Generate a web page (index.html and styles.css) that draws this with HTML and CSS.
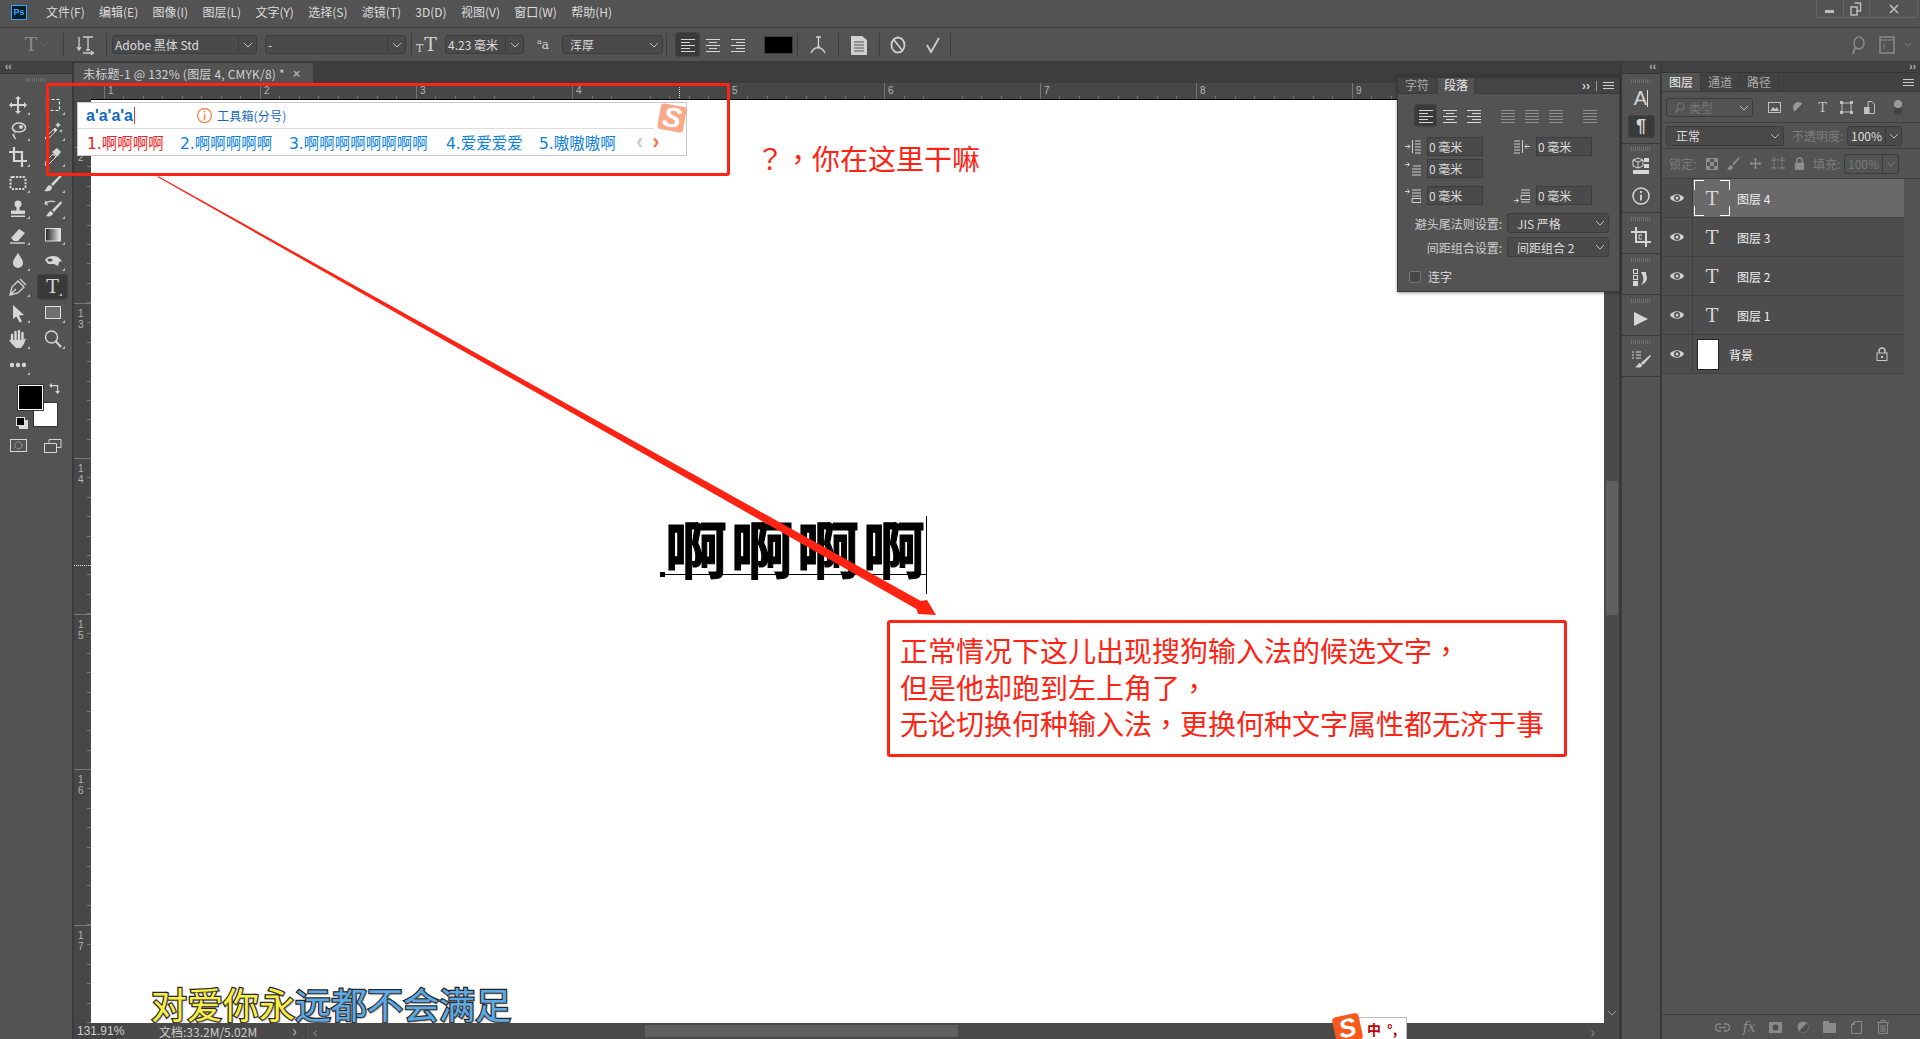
FILE: index.html
```html
<!DOCTYPE html>
<html>
  <head>
    <title>Photoshop</title>
    <meta charset="utf-8">
    <link rel="stylesheet" href="styles.css">
  </head>

  <body>
    <svg class="defs">
      <defs>
        <symbol id="chev" viewBox="0 0 10 6"><path d="M1 1l4 4 4-4" fill="none" stroke="currentColor"/></symbol>
        <symbol id="al-left" viewBox="0 0 16 16"><path d="M1 2.500h14M1 5.500h9M1 8.500h14M1 11.500h9M1 14.500h14" stroke="currentColor"/></symbol>
        <symbol id="al-center" viewBox="0 0 16 16"><path d="M1 2.500h14M4 5.500h8M1 8.500h14M4 11.500h8M1 14.500h14" stroke="currentColor"/></symbol>
        <symbol id="al-right" viewBox="0 0 16 16"><path d="M1 2.500h14M6 5.500h9M1 8.500h14M6 11.500h9M1 14.500h14" stroke="currentColor"/></symbol>
        <symbol id="al-just" viewBox="0 0 16 16"><path d="M1 2.500h14M1 5.500h14M1 8.500h14M1 11.500h14M1 14.500h14" stroke="currentColor"/></symbol>
        <symbol id="burger" viewBox="0 0 11 7"><path d="M0 .5h11M0 3.500h11M0 6.500h11" stroke="currentColor"/></symbol>
        <symbol id="grip" viewBox="0 0 20 4"><path d="M.5 0v4M2.500 0v4M4.500 0v4M6.500 0v4M8.500 0v4M10.500 0v4M12.500 0v4M14.500 0v4M16.500 0v4M18.500 0v4" stroke="currentColor"/></symbol>
        <symbol id="eye" viewBox="0 0 14 10"><path d="M0 5c3-5 11-5 14 0-3 5-11 5-14 0z" fill="currentColor"/><circle cx="7" cy="5" r="3" fill="#4d4d4d"/><circle cx="7" cy="5" r="1.500" fill="currentColor"/></symbol>
        <symbol id="lock" viewBox="0 0 12 14"><path d="M3 6V4a3 3 0 0 1 6 0v2" fill="none" stroke="currentColor" stroke-width="1.400"/><rect x="1" y="6" width="10" height="7.500" fill="none" stroke="currentColor"/><rect x="5" y="9" width="2" height="2" fill="currentColor"/></symbol>
        <linearGradient id="grad"><stop offset="0" stop-color="#222"/><stop offset="1" stop-color="#eee"/></linearGradient>
      </defs>
    </svg>

    <div class="app">
      <header class="menubar">
        <div class="pslogo">Ps</div>
        <nav class="menu">
          <span>文件(F)</span>
          <span>编辑(E)</span>
          <span>图像(I)</span>
          <span>图层(L)</span>
          <span>文字(Y)</span>
          <span>选择(S)</span>
          <span>滤镜(T)</span>
          <span>3D(D)</span>
          <span>视图(V)</span>
          <span>窗口(W)</span>
          <span>帮助(H)</span>
        </nav>
        <div class="winbtns">
          <div class="winbtn"><svg width="10" height="10" viewBox="0 0 10 10"><rect x="0" y="6" width="9" height="3" fill="currentColor"/></svg></div>
          <div class="winbtn"><svg width="12" height="14" viewBox="0 0 12 14"><path d="M4.500 1h6v8h-3M1 5h6v8H1z" fill="none" stroke="currentColor" stroke-width="1.500"/></svg></div>
          <div class="winbtn"><svg width="10" height="10" viewBox="0 0 10 10"><path d="M1 1l8 8M9 1l-8 8" stroke="currentColor" stroke-width="1.600"/></svg></div>
        </div>
      </header>

      <div class="optbar">
        <div class="opt-type"><span class="serif-t big dim">T</span><svg class="tiny-chev" width="8" height="5"><use href="#chev"/></svg></div>
        <div class="vsep"></div>
        <div class="opt-orient">
          <svg width="18" height="20" viewBox="0 0 18 20"><path d="M3 2v13M1 12l2 3 2-3M7 2h10M12 2v13M10 15h4M7 18h11M15 16l2 2-2 2" fill="none" stroke="currentColor" stroke-width="1.300"/></svg>
        </div>
        <div class="vsep"></div>
        <div class="sel sel-font"><span>Adobe 黑体 Std</span><i><svg width="10" height="6"><use href="#chev"/></svg></i></div>
        <div class="sel sel-style"><span>-</span><i><svg width="10" height="6"><use href="#chev"/></svg></i></div>
        <div class="vsep sep-a"></div>
        <div class="opt-size"><span class="serif-t small">T</span><span class="serif-t big">T</span></div>
        <div class="sel sel-size"><span>4.23 毫米</span><i><svg width="10" height="6"><use href="#chev"/></svg></i></div>
        <div class="opt-aa"><sup>a</sup>a</div>
        <div class="sel sel-aa"><span>浑厚</span><b><svg width="10" height="6"><use href="#chev"/></svg></b></div>
        <div class="vsep sep-b"></div>
        <div class="alignbtn on"><svg width="16" height="16"><use href="#al-left"/></svg></div>
        <div class="alignbtn"><svg width="16" height="16"><use href="#al-center"/></svg></div>
        <div class="alignbtn"><svg width="16" height="16"><use href="#al-right"/></svg></div>
        <div class="swatch"></div>
        <div class="vsep sep-c"></div>
        <div class="opt-warp"><svg width="16" height="20" viewBox="0 0 16 20"><path d="M6 2h5M8.500 2v10M7 12h3M1 18c3-7 11-7 14 0" fill="none" stroke="currentColor" stroke-width="1.400"/></svg></div>
        <div class="vsep"></div>
        <div class="opt-warp"><svg width="16" height="20" viewBox="0 0 16 20"><path d="M0 1h11l5 4v15H0z" fill="currentColor"/><path d="M3 7h10M3 10h10M3 13h10M3 16h10" stroke="#555" stroke-width="1.200"/></svg></div>
        <div class="vsep"></div>
        <div class="opt-act"><svg width="16" height="18" viewBox="0 0 16 18"><ellipse cx="8" cy="9" rx="6.500" ry="7.500" fill="none" stroke="currentColor" stroke-width="1.800"/><path d="M4 4l8 10" stroke="currentColor" stroke-width="1.800"/></svg></div>
        <div class="opt-act"><svg width="16" height="18" viewBox="0 0 16 18"><path d="M2 9l4 7 8-14" fill="none" stroke="currentColor" stroke-width="1.800"/></svg></div>
        <div class="vsep"></div>
        <div class="opt-right">
          <svg width="16" height="20" viewBox="0 0 16 20"><ellipse cx="9" cy="8" rx="5" ry="6" fill="none" stroke="currentColor" stroke-width="1.500"/><path d="M5 13l-2 6" stroke="currentColor" stroke-width="1.800"/></svg>
          <svg width="16" height="18" viewBox="0 0 16 18"><rect x="1" y="1" width="14" height="16" fill="none" stroke="currentColor" stroke-width="1.500"/><path d="M1 4h14M5 8v5" stroke="currentColor"/></svg>
          <svg class="wschev" width="8" height="5"><use href="#chev"/></svg>
        </div>
      </div>

      <div class="workspace">
        <aside class="toolcol">
          <div class="collapsebar left">‹‹</div>
          <div class="toolpanel">
            <svg class="grip" width="20" height="4"><use href="#grip"/></svg>
            <div class="tools">
              <div class="tool"><svg viewBox="0 0 20 20"><path d="M10 1l3 3h-2v5h5V7l3 3-3 3v-2h-5v5h2l-3 3-3-3h2v-5H4v2l-3-3 3-3v2h5V4H7z"/></svg></div>
              <div class="tool"><svg viewBox="0 0 20 20"><rect x="3.500" y="4.500" width="13" height="11" fill="none" stroke="#eee" stroke-width="1.200" stroke-dasharray="3 2"/></svg></div>
              <div class="tool"><svg viewBox="0 0 20 20"><ellipse cx="11" cy="6.500" rx="6.500" ry="4.500" fill="none" stroke="currentColor" stroke-width="1.500"/><circle cx="13" cy="6" r="2"/><path d="M2 6l6 6-2 1 2 5-1 .5-3-5 3-1z"/></svg></div>
              <div class="tool"><svg viewBox="0 0 20 20"><path d="M2 17l10-10 2 2-10 10z" fill="none" stroke="currentColor"/><path d="M10 9l2-2 2 2-2 2zM15 1l1 2 2 1-2 1-1 2-1-2-2-1 2-1zM5 4l.7 1.300L7 6l-1.300.7L5 8l-.7-1.300L3 6l1.300-.7zM18 8l.6 1.400L20 10l-1.400.6L18 12l-.6-1.400L16 10l1.400-.6z"/></svg></div>
              <div class="tool"><svg viewBox="0 0 20 20"><path d="M6 0v14h13M1 5h13v15" fill="none" stroke="currentColor" stroke-width="2.200"/></svg></div>
              <div class="tool"><svg viewBox="0 0 20 20"><path d="M3 19l-1-1 1-4 7-7 3 3-7 7z" fill="none" stroke="currentColor"/><path d="M9 5l5-4 1 1 3 3-4 5z"/></svg></div>
              <div class="tool"><svg viewBox="0 0 20 20"><rect x="2.500" y="4" width="15" height="12" rx="2" fill="none" stroke="currentColor" stroke-width="2" stroke-dasharray="2.200 1.200"/></svg></div>
              <div class="tool"><svg viewBox="0 0 20 20"><path d="M18 1L8 11l2 2L19 3zM7 12c-3 0-3 4-6 6 4 1 8 0 8-4z"/></svg></div>
              <div class="tool"><svg viewBox="0 0 20 20"><circle cx="10" cy="5" r="3.500"/><rect x="8.500" y="7" width="3" height="5"/><rect x="3" y="11.500" width="14" height="3.500"/><rect x="3" y="16.500" width="14" height="1.500"/></svg></div>
              <div class="tool"><svg viewBox="0 0 20 20"><path d="M18 2l-9 9 2 2 8-9zM8 12c-2 0-3 3-5 5 3 1 7 0 7-3z"/><path d="M12 3C8 1 4 3 2 5M2 5l1-3M2 5l3 1" fill="none" stroke="currentColor" stroke-width="1.200"/></svg></div>
              <div class="tool"><svg viewBox="0 0 20 20"><path d="M3 13L11 4l6 4-7 8H6z"/><path d="M2 18h15" stroke="currentColor" stroke-width="1.400"/></svg></div>
              <div class="tool"><svg viewBox="0 0 20 20"><rect x="2.500" y="3.500" width="15" height="12.500" fill="url(#grad)" stroke="#ddd"/></svg></div>
              <div class="tool"><svg viewBox="0 0 20 20"><path d="M10 2c3 5 5 7 5 10a5 5 0 0 1-10 0c0-3 2-5 5-10z"/></svg></div>
              <div class="tool"><svg viewBox="0 0 20 20"><path d="M2 9c2-4 9-5 13-3l4 4-3 1-1 4-4-2H5z"/><ellipse cx="7" cy="9" rx="2.500" ry="1.500" fill="#4d4d4d"/></svg></div>
              <div class="tool"><svg viewBox="0 0 20 20"><path d="M2 18l2-8 6-6 6 6-6 6zM2 18l6-6M12 2l6 6" fill="none" stroke="currentColor" stroke-width="1.300"/></svg></div>
              <div class="tool active"><span class="serif-t big">T</span></div>
              <div class="tool"><svg viewBox="0 0 20 20"><path d="M5 2l11 10-5 .5 3 6-2.500 1-3-6L5 16z"/></svg></div>
              <div class="tool"><svg viewBox="0 0 20 20"><rect x="2.500" y="3.500" width="15" height="12" fill="#6f6f6f" stroke="#ddd"/></svg></div>
              <div class="tool"><svg viewBox="0 0 20 20"><path d="M4 6v7M7.500 3v8M11 2v9M14.500 4v8" fill="none" stroke="currentColor" stroke-width="2.400" stroke-linecap="round"/><path d="M4 11h11l3-2-2 6-3 4H8l-4-4-3-4z"/></svg></div>
              <div class="tool"><svg viewBox="0 0 20 20"><circle cx="8.500" cy="8" r="6" fill="none" stroke="currentColor" stroke-width="1.400"/><path d="M13 12.500l5 5.500" stroke="currentColor" stroke-width="2"/></svg></div>
              <div class="tool"><svg viewBox="0 0 20 20"><circle cx="4" cy="10" r="2.200"/><circle cx="10" cy="10" r="2.200"/><circle cx="16" cy="10" r="2.200"/></svg></div>
            </div>
            <div class="colors">
              <div class="bgcolor"></div>
              <div class="fgcolor"></div>
              <svg class="swapcolor" width="11" height="11" viewBox="0 0 11 11"><path d="M3 0L0 2.500 3 5V3.200h5V8H6.200L8.500 11 11 8H9.200V2H3z" fill="currentColor"/></svg>
              <div class="defcolor"></div>
            </div>
            <div class="modes">
              <svg width="18" height="14" viewBox="0 0 18 14"><rect x=".5" y=".5" width="16" height="12" fill="none" stroke="currentColor"/><circle cx="8.500" cy="6.500" r="3.500" fill="none" stroke="currentColor" stroke-dasharray="1 1"/></svg>
              <svg width="18" height="14" viewBox="0 0 18 14"><path d="M5 3.500V.5h12v8h-4M.5 4.500h12v9H.5z" fill="none" stroke="currentColor"/></svg>
            </div>
          </div>
        </aside>

        <main class="docarea">
          <div class="tabstrip">
            <div class="tab"><span>未标题-1 @ 132% (图层 4, CMYK/8) *</span><b>×</b></div>
          </div>
          <div class="rulertop">
            <div class="rulercorner"></div>
            <div class="hruler">
              <div class="hmark"><span>1</span></div>
              <div class="hmark"><span>2</span></div>
              <div class="hmark"><span>3</span></div>
              <div class="hmark"><span>4</span></div>
              <div class="hmark"><span>5</span></div>
              <div class="hmark"><span>6</span></div>
              <div class="hmark"><span>7</span></div>
              <div class="hmark"><span>8</span></div>
              <div class="hmark"><span>9</span></div>
            </div>
            <i class="hcursor"></i>
          </div>
          <div class="docmain">
            <div class="vruler">
              <div class="vmark"><span>2</span></div>
              <div class="vmark"><span>1<br>3</span></div>
              <div class="vmark"><span>1<br>4</span></div>
              <div class="vmark"><span>1<br>5</span></div>
              <div class="vmark"><span>1<br>6</span></div>
              <div class="vmark"><span>1<br>7</span></div>
              <i class="vcursor"></i>
            </div>
            <div class="canvas">
              <div class="bigtext">啊啊啊啊</div>
              <div class="baseline"></div>
              <div class="basedot"></div>
              <div class="textcaret"></div>
              <div class="lyric"><span class="sung">对爱你永</span><span class="unsung">远都不会满足</span></div>
            </div>
            <div class="vscroll">
              <div class="vthumb"></div>
              <svg class="vdown" width="10" height="6"><use href="#chev"/></svg>
            </div>
          </div>
          <div class="statusbar">
            <div class="zoomval">131.91%</div>
            <div class="docinfo">文档:33.2M/5.02M</div>
            <div class="statusarrow">›</div>
            <div class="hscroll">
              <span class="scrollarrow">‹</span>
              <div class="hthumb"></div>
              <span class="scrollarrow end">›</span>
            </div>
          </div>
        </main>

        <div class="iconstrip">
          <div class="collapsebar strip">‹‹</div>
          <div class="stripgroup g1">
            <svg class="grip" width="20" height="4"><use href="#grip"/></svg>
            <div class="stripicon a-icon">A<i></i></div>
            <div class="stripicon para on">¶</div>
          </div>
          <div class="stripgroup g2">
            <svg class="grip" width="20" height="4"><use href="#grip"/></svg>
            <div class="stripicon"><svg width="18" height="18" viewBox="0 0 18 18"><path d="M1 3l5-2 5 2v6l-5 2-5-2z" fill="none" stroke="currentColor"/><path d="M6 5v6M1 3l5 2 5-2" stroke="currentColor" fill="none"/><rect x="12" y="1" width="5" height="4" fill="currentColor"/><rect x="12" y="7" width="5" height="4" fill="currentColor"/><rect x="1" y="13" width="16" height="4" fill="currentColor"/></svg></div>
            <div class="stripicon"><svg width="20" height="20" viewBox="0 0 20 20"><circle cx="10" cy="10" r="8" fill="none" stroke="currentColor" stroke-width="1.500"/><path d="M10 8.500v6M10 5v2" stroke="currentColor" stroke-width="1.800"/></svg></div>
          </div>
          <div class="stripgroup g3">
            <svg class="grip" width="20" height="4"><use href="#grip"/></svg>
            <div class="stripicon"><svg width="20" height="20" viewBox="0 0 20 20"><path d="M5 0v15h15M0 5h15v15" fill="none" stroke="currentColor" stroke-width="2"/><path d="M11 8H8v4h3" fill="none" stroke="currentColor"/></svg></div>
          </div>
          <div class="stripgroup g3">
            <svg class="grip" width="20" height="4"><use href="#grip"/></svg>
            <div class="stripicon"><svg width="18" height="18" viewBox="0 0 18 18"><rect x="1.500" y=".5" width="4" height="4" fill="none" stroke="currentColor"/><rect x="1.500" y="6.500" width="4" height="4" fill="none" stroke="currentColor"/><rect x="1" y="12" width="5" height="5" fill="currentColor"/><path d="M9 3h5v2c2 4 1 9-5 11 3-3 3-7 1-11" fill="currentColor"/></svg></div>
          </div>
          <div class="stripgroup g3">
            <svg class="grip" width="20" height="4"><use href="#grip"/></svg>
            <div class="stripicon"><svg width="16" height="16" viewBox="0 0 16 16"><path d="M1 1l14 7-14 7z" fill="currentColor"/></svg></div>
          </div>
          <div class="stripgroup g3">
            <svg class="grip" width="20" height="4"><use href="#grip"/></svg>
            <div class="stripicon"><svg width="20" height="18" viewBox="0 0 20 18"><path d="M1 1h2M5 1h5M1 4h2M5 4h5M1 7h2M5 7h5" stroke="currentColor"/><path d="M19 4L10 12l2 2 8-9zM9 12c-2 0-2 3-5 4 3 1 7 1 7-2z" fill="currentColor"/></svg></div>
          </div>
        </div>

        <aside class="layerspanel">
          <div class="collapsebar right">››</div>
          <div class="paneltabs">
            <div class="ptab on">图层</div>
            <div class="ptab">通道</div>
            <div class="ptab">路径</div>
            <svg class="burger" width="11" height="7"><use href="#burger"/></svg>
          </div>
          <div class="filterrow">
            <div class="sel sel-filter dimtext"><svg class="findicon" width="11" height="12" viewBox="0 0 11 12"><circle cx="6.500" cy="4.500" r="3.500" fill="none" stroke="currentColor"/><path d="M4 7.500L1 11" stroke="currentColor" stroke-width="1.500"/></svg><span>类型</span><b><svg width="10" height="6"><use href="#chev"/></svg></b></div>
            <div class="filtericons">
              <svg width="13" height="11" viewBox="0 0 13 11"><rect x=".5" y=".5" width="12" height="10" fill="none" stroke="currentColor"/><path d="M2 9l3-4 2 2 2-2 2 4z" fill="currentColor"/></svg>
              <svg width="13" height="13" viewBox="0 0 13 13"><circle cx="6.500" cy="6.500" r="5.500" fill="#999"/><path d="M2.500 10.500l8-8a5.500 5.500 0 0 1-8 8z" fill="#4f4f4f"/></svg>
              <span class="serif-t filter">T</span>
              <svg width="13" height="13" viewBox="0 0 13 13"><rect x="2" y="2" width="9" height="9" fill="none" stroke="currentColor"/><path d="M0 0h3v3H0zM10 0h3v3h-3zM0 10h3v3H0zM10 10h3v3h-3z" fill="currentColor"/></svg>
              <svg width="11" height="13" viewBox="0 0 11 13"><path d="M4 .5h4l2.500 3v9H5V6H4z" fill="none" stroke="currentColor"/><rect x="0" y="6" width="5" height="7" fill="currentColor"/></svg>
              <div class="filtertoggle"></div>
            </div>
          </div>
          <div class="blendrow">
            <div class="sel sel-blend"><span>正常</span><b><svg width="10" height="6"><use href="#chev"/></svg></b></div>
            <span class="rowlabel dimmed">不透明度:</span>
            <div class="sel sel-pct"><span>100%</span><i><svg width="10" height="6"><use href="#chev"/></svg></i></div>
          </div>
          <div class="lockrow">
            <span class="rowlabel dimmed locklabel">锁定:</span>
            <div class="lockicons">
              <svg width="12" height="12" viewBox="0 0 12 12"><path d="M0 0h4v4H0zM8 0h4v4H8zM4 4h4v4H4zM0 8h4v4H0zM8 8h4v4H8z" fill="currentColor"/><rect x=".5" y=".5" width="11" height="11" fill="none" stroke="currentColor"/></svg>
              <svg width="13" height="13" viewBox="0 0 13 13"><path d="M12 0L5 7l2 1 6-7zM4 8C2 8 2 11 0 13c3 0 6 0 6-3z" fill="currentColor"/></svg>
              <svg width="13" height="13" viewBox="0 0 20 20"><path d="M10 1l3 3h-2v5h5V7l3 3-3 3v-2h-5v5h2l-3 3-3-3h2v-5H4v2l-3-3 3-3v2h5V4H7z" fill="currentColor"/></svg>
              <svg width="14" height="13" viewBox="0 0 14 13"><path d="M0 3h14M3 0v13M11 0v13M0 11h14" stroke="currentColor" stroke-dasharray="2 1"/></svg>
              <svg width="11" height="13" viewBox="0 0 12 14"><path d="M3 6V4a3 3 0 0 1 6 0v2" fill="none" stroke="currentColor" stroke-width="1.500"/><rect x="1" y="6" width="10" height="8" fill="currentColor"/></svg>
            </div>
            <span class="rowlabel dimmed filllabel">填充:</span>
            <div class="sel sel-pct dimtext"><span>100%</span><i><svg width="10" height="6"><use href="#chev"/></svg></i></div>
          </div>

          <div class="layerlist">
            <div class="layer selected">
              <div class="layereye"><svg width="14" height="10"><use href="#eye"/></svg></div>
              <div class="layerthumb marked"><span class="serif-t layer-t">T</span></div>
              <div class="layername">图层 4</div>
            </div>
            <div class="layer">
              <div class="layereye"><svg width="14" height="10"><use href="#eye"/></svg></div>
              <div class="layerthumb"><span class="serif-t layer-t">T</span></div>
              <div class="layername">图层 3</div>
            </div>
            <div class="layer">
              <div class="layereye"><svg width="14" height="10"><use href="#eye"/></svg></div>
              <div class="layerthumb"><span class="serif-t layer-t">T</span></div>
              <div class="layername">图层 2</div>
            </div>
            <div class="layer">
              <div class="layereye"><svg width="14" height="10"><use href="#eye"/></svg></div>
              <div class="layerthumb"><span class="serif-t layer-t">T</span></div>
              <div class="layername">图层 1</div>
            </div>
            <div class="layer">
              <div class="layereye"><svg width="14" height="10"><use href="#eye"/></svg></div>
              <div class="bgthumb"></div>
              <div class="layername bgname">背景</div>
              <svg class="bglock" width="12" height="14"><use href="#lock"/></svg>
            </div>
          </div>

          <div class="layerfoot">
            <svg width="15" height="9" viewBox="0 0 15 9"><path d="M6 1H4a3.500 3.500 0 0 0 0 7h2M9 1h2a3.500 3.500 0 0 1 0 7H9M4 4.500h7" fill="none" stroke="currentColor" stroke-width="1.300"/></svg>
            <span class="fx">fx</span>
            <svg width="13" height="11" viewBox="0 0 13 11"><rect width="13" height="11" fill="currentColor"/><circle cx="6.500" cy="5.500" r="3" fill="#4d4d4d"/></svg>
            <svg width="12" height="12" viewBox="0 0 13 13"><circle cx="6.500" cy="6.500" r="6" fill="currentColor"/><path d="M2.500 10.500l8-8a5.500 5.500 0 0 1-8 8z" fill="#4f4f4f"/></svg>
            <svg width="13" height="12" viewBox="0 0 13 12"><path d="M0 0h6v2h7v10H0z" fill="currentColor"/></svg>
            <svg width="11" height="13" viewBox="0 0 11 13"><path d="M.5 4l3-3.500h7v12H.5z" fill="none" stroke="currentColor"/><path d="M0 4h4V0z" fill="currentColor"/></svg>
            <svg width="12" height="14" viewBox="0 0 12 14"><path d="M0 2.500h12M4 2V.5h4V2M1.500 3v10.500h9V3M4 5v7M6 5v7M8 5v7" fill="none" stroke="currentColor"/></svg>
          </div>
        </aside>
      </div>

      <!-- floating paragraph panel -->
      <section class="parapanel">
        <div class="paratop"></div>
        <div class="paratabs">
          <div class="ptab small">字符</div>
          <div class="ptab small on">段落</div>
          <div class="paratabs-end"><span>››</span><i></i><svg width="11" height="7"><use href="#burger"/></svg></div>
        </div>
        <div class="alignrow">
          <div class="alignbtn on"><svg width="16" height="16"><use href="#al-left"/></svg></div>
          <div class="alignbtn"><svg width="16" height="16"><use href="#al-center"/></svg></div>
          <div class="alignbtn"><svg width="16" height="16"><use href="#al-right"/></svg></div>
          <div class="alignbtn faded first"><svg width="16" height="16"><use href="#al-just"/></svg></div>
          <div class="alignbtn faded"><svg width="16" height="16"><use href="#al-just"/></svg></div>
          <div class="alignbtn faded"><svg width="16" height="16"><use href="#al-just"/></svg></div>
          <div class="alignbtn faded last"><svg width="16" height="16"><use href="#al-just"/></svg></div>
        </div>
        <div class="indentgrid">
          <svg width="16" height="14" viewBox="0 0 16 14"><path d="M0 6.500h5M3 4.500l2 2-2 2M7.500 0v13M10 1h6M10 4h6M10 7h6M10 10h6M10 13h6" fill="none" stroke="currentColor"/></svg>
          <div class="numfield">0 毫米</div>
          <svg class="rightico" width="16" height="14" viewBox="0 0 16 14"><path d="M16 6.500h-5M13 4.500l-2 2 2 2M8.500 0v13M0 1h6M0 4h6M0 7h6M0 10h6M0 13h6" fill="none" stroke="currentColor"/></svg>
          <div class="numfield">0 毫米</div>
          <svg width="16" height="14" viewBox="0 0 16 14"><path d="M0 2.500h4M2.500 .5l2 2-2 2M8 4h8M7 7h9M7 10h9M7 13h9" fill="none" stroke="currentColor"/></svg>
          <div class="numfield">0 毫米</div>
          <span></span>
          <span></span>
          <svg class="lastrow" width="16" height="14" viewBox="0 0 16 14"><path d="M0 2.500h4M2.500 .5l2 2-2 2M7 1h9M7 4h9M7 7h9M7 9.500h9v4H7z" fill="none" stroke="currentColor"/></svg>
          <div class="numfield lastrow">0 毫米</div>
          <svg class="rightico lastrow" width="16" height="14" viewBox="0 0 16 14"><path d="M0 11.500h4M2.500 9.500l2 2-2 2M7 1h9M7 4h9M7 6.500h9v4H7zM7 13h9" fill="none" stroke="currentColor"/></svg>
          <div class="numfield lastrow">0 毫米</div>
        </div>
        <div class="pararow first">
          <span>避头尾法则设置:</span>
          <div class="sel sel-para"><em>JIS 严格</em><b><svg width="10" height="6"><use href="#chev"/></svg></b></div>
        </div>
        <div class="pararow">
          <span>间距组合设置:</span>
          <div class="sel sel-para"><em>间距组合 2</em><b><svg width="10" height="6"><use href="#chev"/></svg></b></div>
        </div>
        <div class="checkrow"><i></i><span>连字</span></div>
      </section>

      <!-- sogou input method candidates, in the wrong corner -->
      <div class="ime">
        <div class="imetop">
          <span class="pinyin">a'a'a'a</span>
          <i class="imecaret"></i>
          <svg class="imeinfo" width="17" height="17" viewBox="0 0 17 17"><circle cx="8.500" cy="8.500" r="7" fill="none" stroke="#f58a50" stroke-width="1.400"/><path d="M8.500 7v6M8.500 3.800v1.800" stroke="#f58a50" stroke-width="1.600"/></svg>
          <span class="imetool">工具箱(分号)</span>
        </div>
        <div class="imerow">
          <span class="cand first">1.啊啊啊啊</span>
          <span class="cand c2">2.啊啊啊啊啊</span>
          <span class="cand c3">3.啊啊啊啊啊啊啊啊</span>
          <span class="cand c4">4.爱爱爱爱</span>
          <span class="cand c5">5.嗷嗷嗷啊</span>
          <span class="imepage off">‹</span>
          <span class="imepage">›</span>
        </div>
        <div class="imelogo"><b>S</b></div>
      </div>

      <!-- annotations on top of the screenshot -->
      <div class="redbox top"></div>
      <svg class="arrow" width="1920" height="1039" viewBox="0 0 1920 1039"><polygon points="158,176 920.800,601 927,600 936,615 918,614 916.400,609 157.500,177" fill="#ff2314"/></svg>
      <div class="question"><span class="pn">？，</span>你在这里干嘛</div>
      <div class="redbox note">
        正常情况下这儿出现搜狗输入法的候选文字<span class="pn">，</span><br>
        但是他却跑到左上角了<span class="pn">，</span><br>
        无论切换何种输入法<span class="pn">，</span>更换何种文字属性都无济于事
      </div>

      <div class="imestatus">
        <div class="imestatus-logo"><b>S</b></div>
        <span class="zh">中</span>
        <span class="punct">°,</span>
      </div>
    </div>
  </body>
</html>
```
FILE: styles.css
```css
body {
  margin: 0;
  padding: 0;
  background: #535353;
  color: #d6d6d6;
  font-family: "Noto Sans CJK SC", "Liberation Sans", sans-serif;
  font-size: 12px;
}

.defs {
  width: 0;
  height: 0;
  position: absolute;
}

.app {
  position: relative;
  width: 1920px;
  height: 1039px;
  overflow: hidden;
  display: flex;
  flex-direction: column;
}

/* top bars */
.menubar {
  height: 27px;
  background: #535353;
  border-bottom: 1px solid #3b3b3b;
  display: flex;
  align-items: flex-start;
}

.pslogo {
  width: 14px;
  height: 13px;
  margin: 5px 0 0 11px;
  border: 1px solid #31a8ff;
  background: #001d26;
  color: #31a8ff;
  font: bold 9px/13px "Liberation Sans", sans-serif;
  text-align: center;
}

.menu {
  display: flex;
  gap: 14.3px;
  margin: 3px 0 0 19px;
  color: #dcdcdc;
}

.winbtns {
  margin-left: auto;
  margin-right: 2px;
  height: 18px;
  width: 102px;
  display: flex;
  border: 1px solid #666;
  border-top: 0;
  border-radius: 0 0 3px 3px;
  box-sizing: border-box;
  color: #bbb;
}

.winbtn {
  flex: 1;
  display: flex;
  align-items: center;
  justify-content: center;
}

.winbtn + .winbtn {
  border-left: 1px solid #666;
}

.winbtn:last-child {
  flex: 0 0 47px;
}

.optbar {
  height: 33px;
  background: #535353;
  border-bottom: 1px solid #3b3b3b;
  display: flex;
  align-items: center;
  color: #d0d0d0;
}

.vsep {
  width: 1px;
  height: 24px;
  background: #3d3d3d;
  flex: none;
}

.serif-t {
  font-family: "DejaVu Serif", "Liberation Serif", serif;
  line-height: 1;
}

.serif-t.big {
  font-size: 19px;
}

.serif-t.small {
  font-size: 11px;
  align-self: flex-end;
  margin-right: 1px;
}

.dim {
  color: #8a8a8a;
}

.opt-type {
  width: 63px;
  display: flex;
  align-items: center;
  justify-content: center;
  gap: 3px;
  color: #8a8a8a;
  padding-left: 10px;
  box-sizing: border-box;
}

.tiny-chev {
  color: #707070;
}

.opt-orient {
  width: 42px;
  display: flex;
  justify-content: center;
}

.sel {
  height: 19px;
  display: flex;
  align-items: center;
  background: #4a4a4a;
  border: 1px solid #3c3c3c;
  border-radius: 3px;
  box-sizing: border-box;
  color: #dcdcdc;
  flex: none;
}

.sel span,
.sel em {
  flex: 1;
  padding-left: 2px;
  font-style: normal;
  white-space: nowrap;
}

.sel i,
.sel b {
  display: flex;
  align-items: center;
  justify-content: center;
  font-style: normal;
  width: 17px;
  height: 100%;
  color: #bdbdbd;
}

.sel i {
  border-left: 1px solid #3c3c3c;
}

.sel-font {
  width: 145px;
  margin-left: 5px;
}

.sel-style {
  width: 141px;
  margin-left: 8px;
}

.sep-a {
  margin-left: 5px;
}

.opt-size {
  width: 33px;
  padding-right: 4px;
  box-sizing: border-box;
  display: flex;
  justify-content: center;
  align-items: center;
}

.sel-size {
  width: 79px;
}

.opt-aa {
  width: 38px;
  text-align: center;
  font-family: "DejaVu Serif", serif;
  font-size: 12px;
}

.opt-aa sup {
  font-size: 8px;
}

.sel-aa {
  width: 101px;
}

.sel-aa span {
  padding-left: 7px;
}

.sep-b {
  margin-left: 3px;
  margin-right: 8px;
}

.alignbtn {
  width: 25px;
  height: 25px;
  display: flex;
  align-items: center;
  justify-content: center;
  border-radius: 3px;
  color: #d6d6d6;
  box-sizing: border-box;
}

.alignbtn.on {
  background: #3a3a3a;
  border: 1px solid #444;
}

.swatch {
  width: 29px;
  height: 18px;
  background: #000;
  border: 1px solid #3c3c3c;
  box-sizing: border-box;
  margin-left: 14px;
}

.sep-c {
  margin-left: 4px;
}

.opt-warp {
  width: 40px;
  display: flex;
  justify-content: center;
}

.opt-act {
  width: 35px;
  display: flex;
  justify-content: center;
}

.opt-right {
  margin-left: auto;
  width: 70px;
  display: flex;
  align-items: center;
  gap: 13px;
  color: #8a8a8a;
}

.wschev {
  margin-left: -4px;
}

/* main area */
.workspace {
  flex: 1;
  display: flex;
  min-height: 0;
  background: #3a3a3a;
}

.collapsebar {
  height: 11px;
  flex: none;
  background: #424242;
  color: #bdbdbd;
  font: bold 10px/9px "Liberation Sans", sans-serif;
  border-bottom: 1px solid #363636;
  box-sizing: content-box;
}

.collapsebar.left {
  padding-left: 5px;
}

.collapsebar.strip {
  text-align: right;
  padding-right: 4px;
}

.collapsebar.right {
  text-align: right;
  padding-right: 4px;
  height: 10px;
}

.toolcol {
  width: 72px;
  margin-right: 2px;
  display: flex;
  flex-direction: column;
}

.toolpanel {
  flex: 1;
  background: #535353;
  display: flex;
  flex-direction: column;
  align-items: center;
  padding-top: 4px;
}

.grip {
  color: #6d6d6d;
  flex: none;
}

.tools {
  display: grid;
  grid-template-columns: 35px 35px;
  grid-auto-rows: 26px;
  margin: 9.5px 0 0 -2px;
}

.tool {
  position: relative;
  display: flex;
  align-items: center;
  justify-content: center;
  color: #d6d6d6;
}

.tool svg {
  width: 20px;
  height: 20px;
  fill: currentColor;
}

.tool::after {
  content: "";
  position: absolute;
  right: 5px;
  bottom: 3px;
  border-left: 3px solid transparent;
  border-bottom: 3px solid #b8b8b8;
}

.tool.active {
  background: #3a3a3a;
  border: 1px solid #444;
  border-radius: 3px;
  box-sizing: border-box;
  margin: 0 2px;
}

.colors {
  position: relative;
  width: 42px;
  height: 44px;
  margin-top: 7.5px;
  margin-left: 6px;
  flex: none;
}

.fgcolor {
  position: absolute;
  left: 0;
  top: 0;
  width: 25px;
  height: 25px;
  background: #000;
  border: 1px solid #fff;
  box-shadow: 0 0 0 1px #333;
  box-sizing: border-box;
}

.bgcolor {
  position: absolute;
  left: 15px;
  top: 17px;
  width: 25px;
  height: 25px;
  background: #fff;
  border: 1px solid #333;
  box-sizing: border-box;
}

.swapcolor {
  position: absolute;
  left: 31px;
  top: -2px;
  color: #d6d6d6;
}

.defcolor {
  position: absolute;
  left: -2px;
  top: 32px;
  width: 7px;
  height: 7px;
  background: #000;
  border: 1px solid #ddd;
  box-shadow: 3px 3px 0 #ddd;
}

.modes {
  margin-top: 10px;
  width: 52px;
  display: flex;
  justify-content: space-between;
  color: #d6d6d6;
}

.docarea {
  width: 1545px;
  margin-right: 3px;
  display: flex;
  flex-direction: column;
  background: #464646;
}

.tabstrip {
  height: 21px;
  flex: none;
  background: #3d3d3d;
  display: flex;
  align-items: flex-end;
}

.tab {
  width: 239px;
  height: 20px;
  background: #535353;
  display: flex;
  align-items: center;
  box-sizing: border-box;
  padding-left: 9px;
  color: #d0d0d0;
  white-space: nowrap;
  letter-spacing: 0.2px;
}

.tab b {
  margin-left: 8px;
  font-family: "Liberation Sans", sans-serif;
  font-size: 13px;
  color: #aaa;
}

.rulertop {
  height: 17px;
  flex: none;
  display: flex;
  background: #474747;
  overflow: hidden;
  position: relative;
}

.rulercorner {
  width: 17px;
  flex: none;
  background: #4a4a4a;
}

.hruler {
  display: flex;
  padding-left: 13px;
}

.hmark {
  width: 156px;
  flex: none;
  box-sizing: border-box;
  border-left: 1px solid #777;
  padding-left: 3px;
  font: 10px/15px "Liberation Sans", sans-serif;
  color: #b5b5b5;
  background: repeating-linear-gradient(90deg, transparent 0 18.5px, #777 18.5px 19.5px) left bottom / 100% 4px no-repeat;
}

.hcursor {
  position: absolute;
  left: 605px;
  top: 0;
  height: 100%;
  border-left: 1px dotted #ddd;
}

.docmain {
  flex: 1;
  min-height: 0;
  display: flex;
}

.vruler {
  width: 17px;
  flex: none;
  background: #474747;
  padding-top: 47px;
  box-sizing: border-box;
  overflow: hidden;
  position: relative;
}

.vmark {
  height: 155.5px;
  box-sizing: border-box;
  border-top: 1px solid #777;
  padding: 4px 0 0 4px;
  font: 10px/11px "Liberation Sans", sans-serif;
  color: #b5b5b5;
  background: repeating-linear-gradient(180deg, transparent 0 18.4px, #777 18.4px 19.4px) right top / 4px 100% no-repeat;
}

.vcursor {
  position: absolute;
  left: 0;
  top: 465px;
  width: 100%;
  border-top: 1px dotted #ddd;
}

.canvas {
  position: relative;
  flex: 1;
  background: #fff;
  border-top: 1px solid #000;
  margin-top: -1px;
  overflow: hidden;
}

.bigtext {
  position: absolute;
  left: 574px;
  top: 403px;
  color: #000;
  font-size: 62px;
  line-height: 88px;
  font-weight: 700;
  letter-spacing: 4px;
  -webkit-text-stroke: 1px #000;
  white-space: nowrap;
}

.baseline {
  position: absolute;
  left: 571px;
  top: 474px;
  width: 264px;
  height: 1px;
  background: #000;
}

.basedot {
  position: absolute;
  left: 569px;
  top: 472px;
  width: 5px;
  height: 5px;
  background: #000;
}

.textcaret {
  position: absolute;
  left: 835px;
  top: 416px;
  width: 1px;
  height: 78px;
  background: #000;
}

.lyric {
  position: absolute;
  left: 60px;
  top: 878px;
  font-size: 36px;
  line-height: 50px;
  white-space: nowrap;
  -webkit-text-stroke: 2.5px #222;
  paint-order: stroke fill;
  text-shadow: 1px 1px 2px #555;
}

.sung {
  color: #fbee3e;
}

.unsung {
  color: #5aaae8;
}

.vscroll {
  width: 15px;
  flex: none;
  background: #4a4a4a;
  display: flex;
  flex-direction: column;
  align-items: center;
  padding-top: 381px;
  box-sizing: border-box;
  color: #999;
}

.vthumb {
  width: 12px;
  height: 134px;
  background: #606060;
}

.vdown {
  margin-top: auto;
  margin-bottom: 7px;
}

.statusbar {
  height: 16px;
  flex: none;
  display: flex;
  align-items: center;
  background: #4a4a4a;
  color: #cfcfcf;
}

.zoomval {
  width: 48px;
  height: 100%;
  line-height: 16px;
  padding-left: 3px;
  box-sizing: border-box;
  background: #444;
  font-family: "Liberation Sans", sans-serif;
  white-space: nowrap;
}

.docinfo {
  width: 170px;
  padding-left: 37px;
  box-sizing: border-box;
  white-space: nowrap;
}

.statusarrow {
  width: 13px;
  height: 100%;
  line-height: 14px;
  font-size: 16px;
  color: #bbb;
  border-right: 1px solid #3c3c3c;
}

.hscroll {
  flex: 1;
  height: 100%;
  display: flex;
  align-items: center;
}

.scrollarrow {
  font-size: 16px;
  line-height: 14px;
  color: #888;
  padding-left: 7px;
}

.scrollarrow.end {
  margin-left: auto;
  margin-right: 24px;
}

.hthumb {
  width: 313px;
  height: 12px;
  margin-left: 327px;
  background: #606060;
}

/* collapsed panel icons */
.iconstrip {
  width: 38px;
  margin-right: 2px;
  display: flex;
  flex-direction: column;
  background: #535353;
  flex: none;
}

.stripgroup {
  display: flex;
  flex-direction: column;
  align-items: center;
  box-sizing: border-box;
  border-bottom: 1px solid #3b3b3b;
  flex: none;
  color: #d6d6d6;
}

.stripgroup.g1 {
  height: 70px;
  padding-top: 5px;
}

.stripgroup.g2 {
  height: 69px;
  padding-top: 3px;
}

.stripgroup.g2 .stripicon:nth-of-type(2) {
  margin-top: 1px;
}

.stripgroup.g3 {
  height: 41px;
  padding-top: 4px;
}

.stripgroup.g3 .stripicon {
  height: 33px;
}

.stripicon {
  width: 100%;
  height: 29px;
  display: flex;
  align-items: center;
  justify-content: center;
}

.a-icon {
  font: 20px "Liberation Sans", sans-serif;
  height: 30px;
}

.a-icon i {
  width: 1px;
  height: 17px;
  background: #ddd;
}

.para {
  height: 23px;
  width: 27px;
  margin-top: 2px;
  background: #3a3a3a;
  border: 1px solid #444;
  border-radius: 3px;
  box-sizing: border-box;
  font: bold 18px "Liberation Sans", sans-serif;
}

/* layers panel */
.layerspanel {
  flex: 1;
  display: flex;
  flex-direction: column;
  background: #535353;
  min-width: 0;
}

.paneltabs {
  height: 19px;
  flex: none;
  display: flex;
  background: #424242;
  border-bottom: 1px solid #3b3b3b;
  align-items: stretch;
  box-sizing: border-box;
}

.ptab {
  width: 38px;
  text-align: center;
  line-height: 18px;
  color: #aaa;
  flex: none;
  border-right: 1px solid #3b3b3b;
}

.ptab.on {
  background: #535353;
  color: #eee;
}

.ptab.small {
  width: 38px;
  line-height: 14px;
  border-right: 0;
}

.ptab.small.on {
  box-sizing: border-box;
  margin-left: 1px;
  border-left: 1px solid #3b3b3b;
  border-right: 1px solid #3b3b3b;
  height: 16px;
}

.burger {
  margin-left: auto;
  margin-right: 6px;
  align-self: center;
  color: #ccc;
}

.filterrow {
  height: 31px;
  flex: none;
  display: flex;
  align-items: center;
  padding-left: 4px;
  box-sizing: border-box;
  border-bottom: 1px solid #3f3f3f;
}

.sel-filter {
  width: 87px;
  background: #535353;
  color: #777;
  margin-top: 1px;
}

.findicon {
  margin-left: 7px;
}

.sel-filter span {
  padding-left: 4px;
}

.dimtext span,
.dimtext i {
  color: #777;
}

.filtericons {
  display: flex;
  align-items: center;
  gap: 11px;
  margin: 1px 0 0 15px;
  color: #c0c0c0;
}

.serif-t.filter {
  font-size: 13px;
  width: 13px;
  text-align: center;
}

.filtertoggle {
  width: 8px;
  height: 15px;
  margin-left: 8px;
  border-radius: 4px;
  background: radial-gradient(circle at 50% 4px, #999 4px, #444 4.5px);
}

.blendrow {
  height: 26px;
  flex: none;
  display: flex;
  align-items: center;
  padding-left: 4px;
  box-sizing: border-box;
  border-bottom: 1px solid #3f3f3f;
}

.sel-blend {
  width: 118px;
  height: 20px;
}

.sel-blend span {
  padding-left: 9px;
}

.rowlabel {
  flex: none;
  white-space: nowrap;
}

.dimmed {
  color: #7d7d7d;
}

.blendrow .rowlabel {
  margin-left: 8px;
  width: 55px;
}

.sel-pct {
  width: 55px;
  height: 20px;
}

.sel-pct span {
  padding-left: 3px;
}

.sel-pct i {
  width: 15px;
}

.lockrow {
  height: 30px;
  flex: none;
  display: flex;
  align-items: center;
  padding-left: 7px;
  box-sizing: border-box;
  border-bottom: 1px solid #3f3f3f;
}

.locklabel {
  width: 37px;
}

.lockicons {
  display: flex;
  align-items: center;
  width: 107px;
  gap: 9px;
  color: #8d8d8d;
}

.filllabel {
  width: 31px;
}

.lockrow .sel-pct {
  background: #535353;
}

.layerlist {
  flex: 1;
  min-height: 0;
  margin-right: 16px;
}

.layer {
  height: 39px;
  display: flex;
  align-items: center;
  box-sizing: border-box;
  border-bottom: 1px solid #3f3f3f;
  background: #4d4d4d;
}

.layer.selected {
  background: #696969;
}

.layereye {
  width: 31px;
  height: 100%;
  flex: none;
  display: flex;
  align-items: center;
  justify-content: center;
  box-sizing: border-box;
  border-right: 1px solid #3f3f3f;
  background: #4d4d4d;
  color: #d0d0d0;
}

.layerthumb {
  width: 36px;
  height: 36px;
  margin-left: 1px;
  display: flex;
  align-items: center;
  justify-content: center;
  color: #d6d6d6;
}

.layerthumb.marked {
  background:
    linear-gradient(#fff, #fff) left top / 10px 1px no-repeat,
    linear-gradient(#fff, #fff) left top / 1px 10px no-repeat,
    linear-gradient(#fff, #fff) right top / 10px 1px no-repeat,
    linear-gradient(#fff, #fff) right top / 1px 10px no-repeat,
    linear-gradient(#fff, #fff) left bottom / 10px 1px no-repeat,
    linear-gradient(#fff, #fff) left bottom / 1px 10px no-repeat,
    linear-gradient(#fff, #fff) right bottom / 10px 1px no-repeat,
    linear-gradient(#fff, #fff) right bottom / 1px 10px no-repeat;
}

.serif-t.layer-t {
  font-size: 19px;
}

.layername {
  margin-left: 7px;
  color: #eee;
}

.bgthumb {
  width: 22px;
  height: 31px;
  margin-left: 4px;
  background: #fff;
  border: 1px solid #222;
  box-sizing: border-box;
}

.bgname {
  margin-left: 10px;
}

.bglock {
  margin-left: auto;
  margin-right: 16px;
  color: #c8c8c8;
}

.layerfoot {
  height: 25px;
  flex: none;
  box-sizing: border-box;
  display: grid;
  grid-template-columns: repeat(7, 26.8px);
  justify-items: center;
  align-items: center;
  border-top: 1px solid #3f3f3f;
  padding-left: 47px;
  color: #8a8a8a;
}

.fx {
  font: italic 14px "DejaVu Serif", serif;
}

/* floating paragraph panel */
.parapanel {
  position: absolute;
  left: 1397px;
  top: 75px;
  width: 223px;
  height: 217px;
  background: #535353;
  border: 1px solid #3b3b3b;
  border-top: 0;
  box-sizing: border-box;
  box-shadow: 0 1px 3px rgba(0, 0, 0, 0.4);
}

.paratop {
  height: 3px;
  background: #383838;
}

.paratabs {
  height: 15px;
  background: #444;
  display: flex;
  align-items: flex-start;
  border-bottom: 1px solid #3b3b3b;
}

.paratabs-end {
  margin-left: auto;
  display: flex;
  align-items: center;
  gap: 6px;
  height: 100%;
  padding-right: 5px;
  color: #d0d0d0;
  font: bold 12px "Liberation Sans", sans-serif;
}

.paratabs-end i {
  width: 1px;
  height: 10px;
  background: #999;
}

.alignrow {
  display: flex;
  align-items: center;
  padding: 10px 0 0 16px;
}

.alignrow .alignbtn {
  width: 23px;
  height: 23px;
  margin-left: 1px;
}

.alignrow .alignbtn.on {
  margin-left: 0;
}

.alignrow .alignbtn.faded {
  color: #8e8e8e;
}

.alignrow .alignbtn.first {
  margin-left: 11px;
}

.alignrow .alignbtn.last {
  margin-left: 11px;
}

.indentgrid {
  display: grid;
  grid-template-columns: 22px 56px 53px 56px;
  grid-template-rows: 19px 19px 24px;
  row-gap: 3px;
  padding: 10px 0 0 7px;
  align-items: center;
  color: #d0d0d0;
}

.rightico {
  justify-self: end;
  margin-right: 6px;
}

.lastrow {
  align-self: end;
}

svg.lastrow {
  margin-bottom: 2px;
}

.numfield {
  height: 19px;
  box-sizing: border-box;
  border: 1px solid #3c3c3c;
  background: #4a4a4a;
  line-height: 17px;
  padding-left: 1px;
  color: #dcdcdc;
  white-space: nowrap;
}

.pararow {
  display: flex;
  align-items: center;
  justify-content: flex-end;
  gap: 5px;
  padding-right: 10px;
  margin-top: 4px;
  color: #cfcfcf;
}

.pararow.first {
  margin-top: 8px;
}

.sel-para {
  width: 102px;
  height: 20px;
}

.sel-para em {
  padding-left: 9px;
}

.checkrow {
  display: flex;
  align-items: center;
  padding: 11px 0 0 11px;
  gap: 7px;
  color: #dcdcdc;
}

.checkrow i {
  width: 12px;
  height: 12px;
  border: 1px solid #777;
  border-radius: 2px;
  box-sizing: border-box;
  background: #474747;
}

/* sogou popup */
.ime {
  position: absolute;
  left: 77px;
  top: 102px;
  width: 610px;
  height: 54px;
  background: #fff;
  border: 1px solid #c7c7d0;
  box-sizing: border-box;
  color: #0a7fe0;
}

.imetop {
  height: 25px;
  margin-right: 32px;
  border-bottom: 1px solid #ddd;
  display: flex;
  align-items: center;
  padding-left: 8px;
}

.pinyin {
  font: bold 16px "Liberation Sans", sans-serif;
  color: #1268c4;
}

.imecaret {
  width: 1px;
  height: 17px;
  background: #e33;
  margin-left: 1px;
}

.imeinfo {
  margin-left: 61px;
}

.imetool {
  margin-left: 4px;
  color: #1268c4;
  letter-spacing: 0.2px;
}

.imerow {
  display: flex;
  align-items: center;
  height: 26px;
  padding-left: 9px;
  font-family: "DejaVu Sans", "Noto Sans CJK SC", sans-serif;
  font-size: 15.5px;
  white-space: nowrap;
}

.cand.first {
  color: #f02020;
  width: 93px;
}

.c2 {
  width: 109px;
}

.c3 {
  width: 157px;
}

.c4 {
  width: 93px;
}

.c5 {
  width: 97px;
}

.imepage {
  font: bold 22px/20px "Liberation Sans", sans-serif;
  color: #f4794a;
  margin-left: 9px;
}

.imepage.off {
  color: #ccc;
  margin-left: 0;
}

.imelogo {
  position: absolute;
  right: 0;
  top: 0;
  width: 26px;
  height: 26px;
  margin: 2px 1px;
  background: #f9a888;
  border-radius: 3px;
  transform: rotate(10deg);
  color: #fff;
  font: italic 28px/26px "Liberation Sans", sans-serif;
  text-align: center;
}

.redbox {
  position: absolute;
  box-sizing: border-box;
  border: 3px solid #ff2314;
  border-radius: 3px;
}

.redbox.top {
  left: 46px;
  top: 83px;
  width: 684px;
  height: 93px;
}

.arrow {
  position: absolute;
  left: 0;
  top: 0;
}

.question {
  position: absolute;
  left: 756px;
  top: 138px;
  color: #ff2314;
  font-size: 28px;
  line-height: 40px;
}

/* centred full-width punctuation, as in the original */
.pn {
  font-family: "Noto Sans CJK TC", sans-serif;
}

.redbox.note {
  left: 887px;
  top: 620px;
  width: 680px;
  height: 137px;
  padding: 9px 0 0 10px;
  background: #fff;
  color: #ff2314;
  font-size: 28px;
  line-height: 36.7px;
  white-space: nowrap;
}

.imestatus {
  position: absolute;
  left: 1357px;
  top: 1017px;
  width: 50px;
  height: 22px;
  box-sizing: border-box;
  background: #fff;
  border: 1px solid #bbb;
  border-bottom: 0;
  display: flex;
  align-items: center;
  color: #c00000;
  font-weight: 700;
  font-size: 14px;
  padding-left: 9px;
  gap: 6px;
}

.imestatus-logo {
  position: absolute;
  left: -24px;
  top: -3px;
  width: 27px;
  height: 27px;
  background: #f8581c;
  border-radius: 4px;
  transform: rotate(-12deg);
  color: #fff;
  font: italic bold 26px/27px "Liberation Sans", sans-serif;
  text-align: center;
}
```
